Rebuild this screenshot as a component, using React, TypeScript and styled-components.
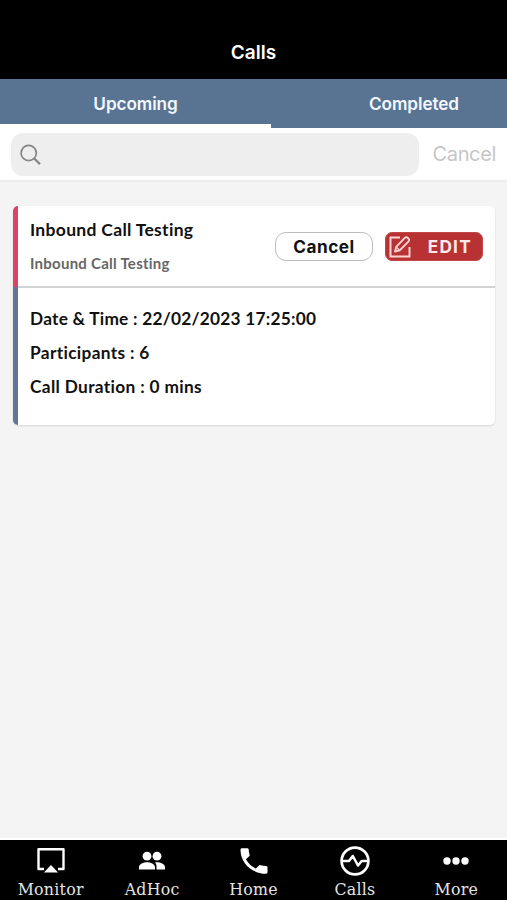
import React from "react";
import styled, { createGlobalStyle } from "styled-components";

const GlobalStyle = createGlobalStyle`
  * { box-sizing: border-box; }
  html, body { margin: 0; padding: 0; background: #f4f4f4; }
  button, input { font: inherit; border: 0; padding: 0; margin: 0; background: none; }
`;

const Screen = styled.div`
  width: 507px;
  height: 900px;
  display: flex;
  flex-direction: column;
  overflow: hidden;
  background: #f4f4f4;
  font-family: Inter, "Liberation Sans", sans-serif;
`;

const Header = styled.header`
  height: 79px;
  padding-top: 40px;
  background: #000;
  color: #fff;
  text-align: center;
  font-size: 19px;
  line-height: 25px;
  font-weight: 600;
`;

const Tabs = styled.nav`
  display: flex;
  height: 49px;
  background: #597492;
  overflow: hidden;
`;

const Tab = styled.button<{ $active?: boolean; $width: number }>`
  flex: 0 0 ${(p) => p.$width}px;
  height: 49px;
  border-bottom: 4px solid ${(p) => (p.$active ? "#fff" : "transparent")};
  padding-top: 5px;
  color: #f3f8ff;
  font-size: 17.2px;
  line-height: 40px;
  font-weight: 600;
  letter-spacing: -0.1px;
`;

const SearchBar = styled.div`
  display: flex;
  align-items: center;
  height: 54px;
  padding: 1px 11px 0;
  background: #fff;
  border-bottom: 2px solid #ededed;
`;

const SearchField = styled.label`
  display: flex;
  align-items: center;
  width: 408px;
  height: 43px;
  padding-left: 9px;
  border-radius: 12px;
  background: #eee;
`;

const SearchInput = styled.input`
  flex: 1;
  min-width: 0;
  height: 100%;
  outline: none;
`;

const SearchCancel = styled.button`
  margin-left: 14px;
  padding-bottom: 1px;
  color: #c6c6c6;
  font-size: 20px;
  line-height: 26px;
  letter-spacing: -0.35px;
  white-space: nowrap;
`;

const Content = styled.main`
  flex: 1;
  padding: 24px 12px 0 13px;
`;

const Card = styled.article`
  height: 219px;
  border-radius: 5px;
  overflow: hidden;
  background: #fff;
  box-shadow: 0 1px 2px rgba(0, 0, 0, 0.12);
  font-family: Lato, "Noto Sans", sans-serif;
`;

const CardHead = styled.div`
  display: flex;
  height: 81px;
  padding-left: 12px;
  padding-right: 12px;
  border-left: 5px solid #de4266;
`;

const Titles = styled.div`
  flex: 1;
  padding-top: 12px;
`;

const Title = styled.h2`
  margin: 0;
  color: #111;
  font-size: 17.5px;
  line-height: 24px;
  font-weight: 700;
  letter-spacing: 0.31px;
  white-space: nowrap;
`;

const Subtitle = styled.div`
  margin-top: 9px;
  color: #666;
  font-size: 15px;
  line-height: 24px;
  font-weight: 700;
  letter-spacing: 0.25px;
  white-space: nowrap;
`;

const Actions = styled.div`
  display: flex;
  gap: 12px;
  padding-top: 26px;
`;

const ActionButton = styled.button<{ $primary?: boolean }>`
  display: flex;
  align-items: center;
  justify-content: ${(p) => (p.$primary ? "space-between" : "center")};
  width: 98px;
  height: 29px;
  ${(p) => p.$primary && "padding: 0 10px 0 3px;"}
  border: ${(p) => (p.$primary ? "1px solid #c24747" : "1.5px solid #bdbdbd")};
  border-radius: ${(p) => (p.$primary ? 7 : 11)}px;
  background: ${(p) => (p.$primary ? "#b83234" : "#fff")};
  color: ${(p) => (p.$primary ? "#ffe9e9" : "#111")};
  font-family: Inter, sans-serif;
  font-size: 17.2px;
  line-height: 26px;
  font-weight: 650;
  letter-spacing: ${(p) => (p.$primary ? 1.3 : 0.5)}px;
`;

const Details = styled.div`
  height: 138px;
  padding: 15px 0 0 12px;
  border-left: 5px solid #62759a;
`;

const Divider = styled.div`
  height: 2px;
  margin: -1px 0 -1px 5px;
  background: #d3d3d3;
`;

const Detail = styled.div<{ $tracking: number }>`
  height: 34px;
  color: #111;
  font-size: 17.3px;
  line-height: 34px;
  font-weight: 700;
  letter-spacing: ${(p) => p.$tracking}px;
`;

const BottomBar = styled.nav`
  display: flex;
  height: 62px;
  border-top: 2px solid #fff;
  background: #000;
`;

const NavItem = styled.button`
  flex: 1;
  display: flex;
  flex-direction: column;
  align-items: center;
  justify-content: flex-start;
  height: 60px;
  padding-top: 4px;
  color: #fff;
`;

const NavIcon = styled.span`
  flex: none;
  display: flex;
  align-items: center;
  height: 34px;
`;

const NavLabel = styled.span`
  flex: none;
  margin-top: 1px;
  color: #e4e4e4;
  font-family: "DejaVu Serif", serif;
  font-size: 15.8px;
  line-height: 22px;
  letter-spacing: 0.25px;
  white-space: nowrap;
`;

const MonitorIcon = () => (
  <svg width="30" height="28" viewBox="0 0 30 28" fill="none">
    <path d="M8 22H2.500V2.200h25V22H22" stroke="#fff" strokeWidth="2.400" strokeLinejoin="round" />
    <path d="M8 25.500 15 18l7 7.500z" fill="#fff" />
  </svg>
);

const PeopleIcon = () => (
  <svg width="28" height="28" viewBox="0 0 28 28" fill="#fff">
    <circle cx="9" cy="9.200" r="4.400" />
    <circle cx="19" cy="9.200" r="4.400" />
    <path d="M1 22.500v-2.300c0-3.500 4.600-5 8-5s8 1.500 8 5v2.300zM18.500 22.500h8.500v-2.300c0-3.500-4.600-5-8-5-.7 0-1.300.1-2 .2 1.200 1.300 1.700 2.900 1.500 4.800z" />
  </svg>
);

const PhoneIcon = () => (
  <svg width="36" height="34" viewBox="0 0 24 24" preserveAspectRatio="none" fill="#fff">
    <path d="M6.620 10.790c1.440 2.830 3.760 5.140 6.590 6.590l2.200-2.200c.27-.27.67-.36 1.020-.24 1.120.37 2.330.57 3.570.57.55 0 1 .45 1 1V20c0 .55-.45 1-1 1-9.390 0-17-7.610-17-17 0-.55.45-1 1-1h3.500c.55 0 1 .45 1 1 0 1.250.2 2.450.57 3.570.11.35.03.74-.25 1.020z" />
  </svg>
);

const PulseIcon = () => (
  <svg width="32" height="32" viewBox="0 0 32 32" fill="none" stroke="#fff" strokeLinejoin="round">
    <circle cx="16" cy="16" r="13.400" strokeWidth="2.700" />
    <path d="M3 16h7l3.800-5 5.200 9.500 3.700-4.500H29" strokeWidth="2.600" />
  </svg>
);

const MoreIcon = () => (
  <svg width="28" height="28" viewBox="0 0 28 28" fill="#fff">
    <circle cx="5" cy="14" r="3.700" />
    <circle cx="14" cy="14" r="3.700" />
    <circle cx="23" cy="14" r="3.700" />
  </svg>
);

const SearchIcon = () => (
  <svg width="22" height="22" viewBox="0 0 22 22" fill="none" stroke="#858585">
    <circle cx="8.700" cy="9" r="7.600" strokeWidth="1.700" />
    <path d="m14.200 14.500 5.800 5.600" strokeWidth="2.200" />
  </svg>
);

const EditIcon = () => (
  <svg width="22" height="22" viewBox="0 0 22 22" fill="none" stroke="#ffd4d4">
    <path d="M11 1.500H1.500v19H20.500V11" strokeWidth="2" />
    <path d="m6 15.500 1.200-4.600 8.600-9c1-1 2.100-.9 3 0l.7.700c.9.900.8 2-.1 3l-8.700 8.700z" strokeWidth="1.900" strokeLinejoin="round" />
    <path d="m7.200 11 3.300 3.200" strokeWidth="1.300" />
  </svg>
);

const navItems = [
  { label: "Monitor", Icon: MonitorIcon },
  { label: "AdHoc", Icon: PeopleIcon },
  { label: "Home", Icon: PhoneIcon },
  { label: "Calls", Icon: PulseIcon },
  { label: "More", Icon: MoreIcon },
];

export default function App() {
  return (
    <>
      <GlobalStyle />
      <Screen>
        <Header>Calls</Header>
        <Tabs>
          <Tab $active $width={271}>Upcoming</Tab>
          <Tab $width={286}>Completed</Tab>
        </Tabs>
        <SearchBar>
          <SearchField>
            <SearchIcon />
            <SearchInput aria-label="Search calls" />
          </SearchField>
          <SearchCancel>Cancel</SearchCancel>
        </SearchBar>
        <Content>
          <Card>
            <CardHead>
              <Titles>
                <Title>Inbound Call Testing</Title>
                <Subtitle>Inbound Call Testing</Subtitle>
              </Titles>
              <Actions>
                <ActionButton>Cancel</ActionButton>
                <ActionButton $primary>
                  <EditIcon />
                  <span>EDIT</span>
                </ActionButton>
              </Actions>
            </CardHead>
            <Divider />
            <Details>
              <Detail $tracking={0.24}>Date &amp; Time : 22/02/2023 17:25:00</Detail>
              <Detail $tracking={0.34}>Participants : 6</Detail>
              <Detail $tracking={0.34}>Call Duration : 0 mins</Detail>
            </Details>
          </Card>
        </Content>
        <BottomBar>
          {navItems.map(({ label, Icon }) => (
            <NavItem key={label}>
              <NavIcon><Icon /></NavIcon>
              <NavLabel>{label}</NavLabel>
            </NavItem>
          ))}
        </BottomBar>
      </Screen>
    </>
  );
}
